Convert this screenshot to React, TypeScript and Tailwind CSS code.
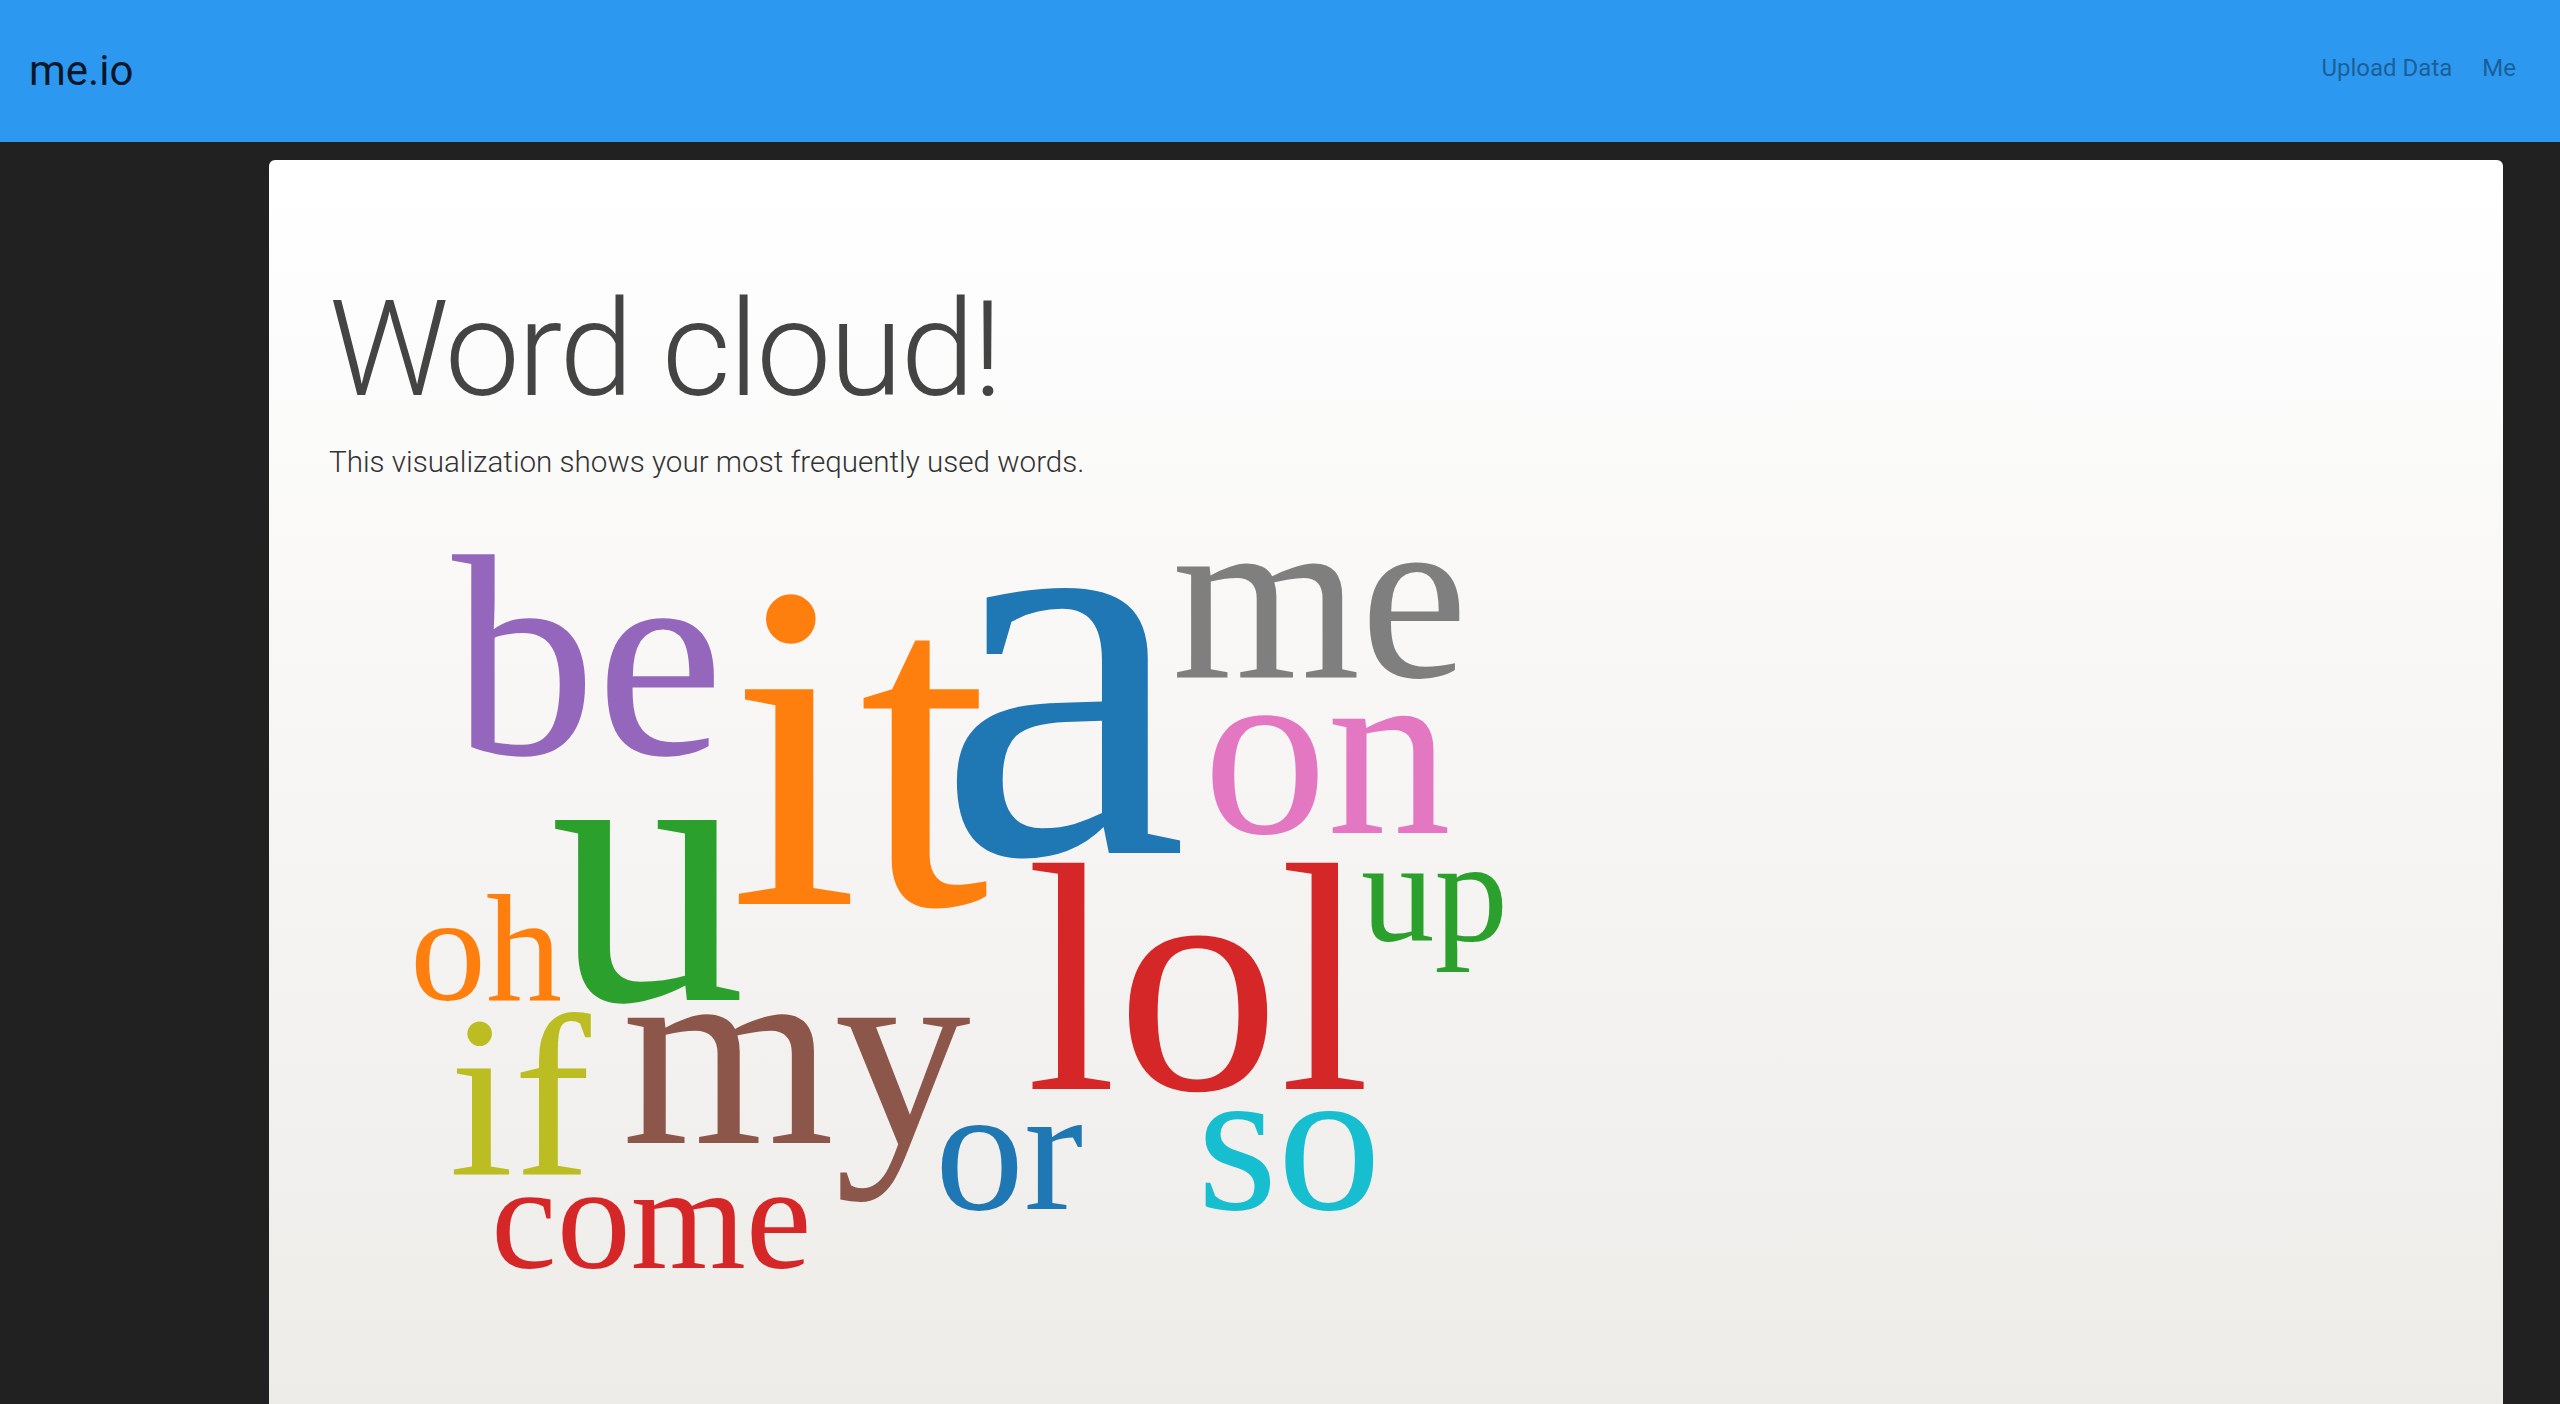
const words = [
  { text: "be", x: 123, y: 233, size: 288, color: "#9467bd" },
  { text: "it", x: 400, y: 383, size: 468, color: "#ff7f0e" },
  { text: "a", x: 608, y: 332, size: 565, color: "#1f77b4" },
  { text: "me", x: 843, y: 156, size: 242, color: "#7f7f7f" },
  { text: "on", x: 874, y: 312, size: 248, color: "#e377c2" },
  { text: "u", x: 221, y: 479, size: 392, color: "#2ca02c" },
  { text: "oh", x: 81, y: 479, size: 152, color: "#ff7f0e" },
  { text: "lol", x: 697, y: 568, size: 326, color: "#d62728" },
  { text: "up", x: 1032, y: 420, size: 147, color: "#2ca02c" },
  { text: "if", x: 120, y: 654, size: 232, color: "#bcbd22" },
  { text: "my", x: 293, y: 622, size: 273, color: "#8c564b" },
  { text: "or", x: 606, y: 688, size: 178, color: "#1f77b4" },
  { text: "so", x: 868, y: 688, size: 207, color: "#17becf" },
  { text: "come", x: 162, y: 747, size: 148, color: "#d62728" },
]

function WordCloud() {
  return (
    <svg width="1200" height="800" viewBox="0 0 1200 800" className="mt-[43px] block">
      {words.map((w) => (
        <text
          key={w.text}
          x={w.x}
          y={w.y}
          fontSize={w.size}
          fill={w.color}
          fontFamily="'Liberation Serif', 'Times New Roman', serif"
        >
          {w.text}
        </text>
      ))}
    </svg>
  )
}

export default function App() {
  return (
    <div className="min-h-screen bg-[#212121] font-['Roboto',sans-serif]">
      <nav className="flex h-[142px] items-center justify-between bg-[#2c98f0] pl-[29px] pr-[44px]">
        <a className="text-[42px] leading-none text-black/85">me.io</a>
        <div className="mb-[6px] flex items-center gap-[30px] text-[24px] text-black/40">
          <a>Upload Data</a>
          <a>Me</a>
        </div>
      </nav>

      <main className="ml-[269px] mr-[57px] mt-[18px] min-h-[1244px] rounded-t-md bg-gradient-to-b from-white to-[#eeece9] pl-[60px] pt-[123px]">
        <h1 className="text-[134px] font-light leading-none tracking-[-2.3px] text-[#444]">Word cloud!</h1>
        <p className="mt-[31px] text-[29.6px] font-light leading-none text-[#333]">
          This visualization shows your most frequently used words.
        </p>
        <WordCloud />
      </main>
    </div>
  )
}
